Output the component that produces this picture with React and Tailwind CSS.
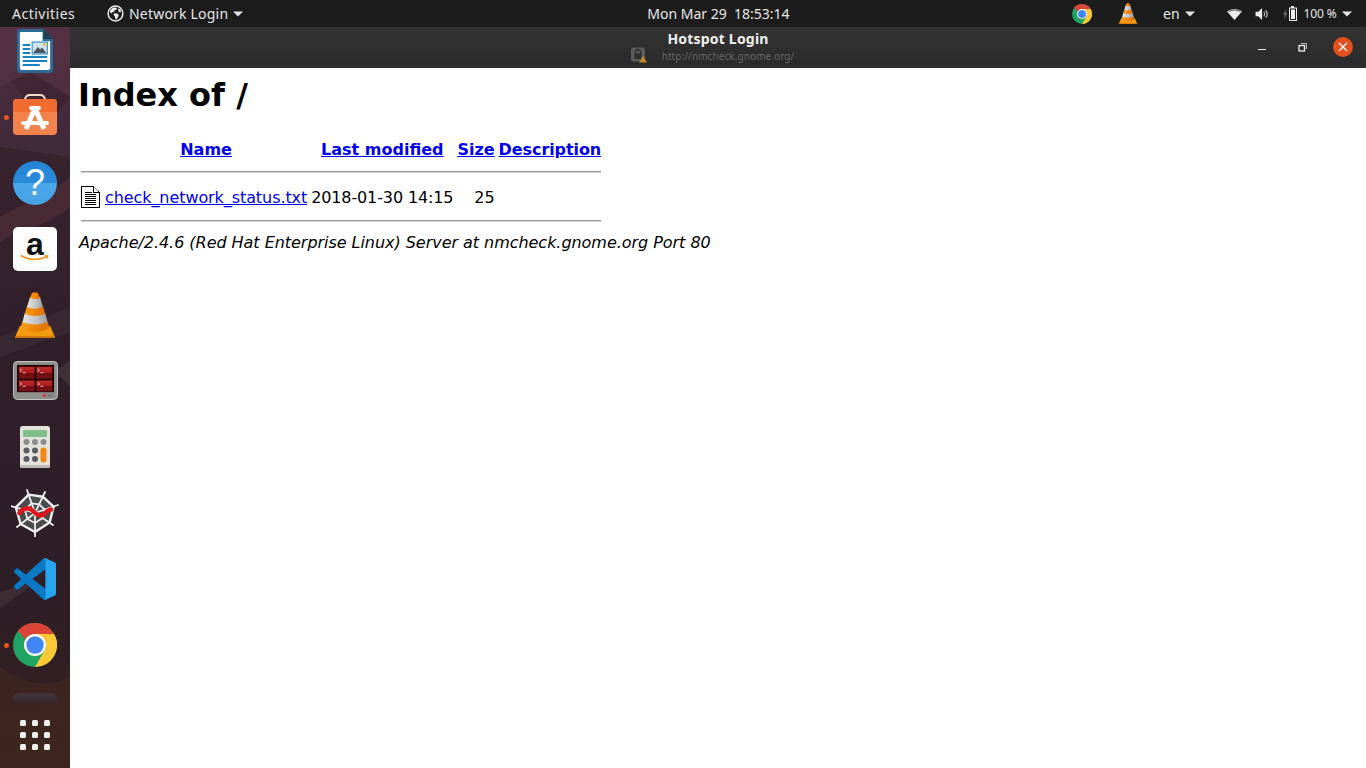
import React from "react";

const Caret = () => (
  <svg width="10" height="6" viewBox="0 0 10 6" className="shrink-0"><path d="M0 0.5h10L5 5.5z" fill="#e6e6e6" /></svg>
);

const Globe = () => (
  <svg width="17" height="17" viewBox="0 0 17 17">
    <circle cx="8.5" cy="8.5" r="7.4" fill="#1c1c1c" stroke="#ececec" strokeWidth="1.5" />
    <path d="M3 5.5l2.5-2.6 3-.6 1.5 1.2-1 1.6-1.6.2-.3 1.5-1.7.2-.6 1.4-1.6-1z" fill="#ececec" />
    <path d="M7.2 8.2l3 .3 1.6 1.6-.8 2.2-1.6 2.2-1-.2-.4-2.6-1.4-1.6z" fill="#ececec" />
    <path d="M11.5 3.2l2.4 2-.2 2.2-1.8-.4-.8-2z" fill="#ececec" />
  </svg>
);

const Chrome = ({ size }) => (
  <svg width={size} height={size} viewBox="0 0 48 48">
    <circle cx="24" cy="24" r="24" fill="#1fa463" />
    <path d="M24 0a24 24 0 0 1 20.8 12H24a12 12 0 0 0-10.4 6L5.2 8.5A24 24 0 0 1 24 0z" fill="#db4437" />
    <path d="M44.8 12H24v6h10.4a12 12 0 0 1 0 12L24 48a24 24 0 0 0 20.8-36z" fill="#fcc934" />
    <circle cx="24" cy="24" r="12" fill="#fff" />
    <circle cx="24" cy="24" r="9.5" fill="#4285f4" />
  </svg>
);

const Vlc = ({ w, h }) => (
  <svg width={w} height={h} viewBox="0 0 40 46">
    <defs>
      <linearGradient id="vlcO" x1="0" x2="1" y1="0" y2="0">
        <stop offset="0" stopColor="#f7a11a" />
        <stop offset="0.5" stopColor="#f08405" />
        <stop offset="1" stopColor="#d96f03" />
      </linearGradient>
      <linearGradient id="vlcG" x1="0" x2="1" y1="0" y2="0">
        <stop offset="0" stopColor="#e6e6e6" />
        <stop offset="0.55" stopColor="#c4c4c4" />
        <stop offset="1" stopColor="#9a9a9a" />
      </linearGradient>
    </defs>
    <path d="M0 45.500L5 33.500Q20 41 35 33.500L40 45.500z" fill="#f29a12" />
    <path d="M.8 44h38.400l.8 1.800H0z" fill="#d87a06" />
    <path d="M7.500 29Q20 33 32.500 29L34.500 36Q20 44 5.500 36z" fill="url(#vlcO)" />
    <path d="M9.800 21Q20 24.500 30.200 21L32.500 30Q20 35 7.500 30z" fill="url(#vlcG)" />
    <path d="M12 14Q20 17 28 14L30.200 22Q20 26 9.800 22z" fill="url(#vlcO)" />
    <path d="M15 5Q20 7 25 5L28 15Q20 18.500 12 15z" fill="url(#vlcG)" />
    <path d="M17 1Q20 -.5 23 1L25 6Q20 8 15 6z" fill="url(#vlcO)" />
  </svg>
);

const Writer = () => (
  <svg width="36" height="44" viewBox="0 0 38 44" preserveAspectRatio="none">
    <path d="M3 0h25l10 10v30a4 4 0 0 1-4 4H4a4 4 0 0 1-4-4V3a3 3 0 0 1 3-3z" fill="#2c6a93" />
    <path d="M4 3h23v9h8v27a2 2 0 0 1-2 2H5a2 2 0 0 1-2-2V4z" fill="#fff" />
    <path d="M28 0l10 10h-10z" fill="#1c3d58" />
    <g fill="#1b82c0">
      <rect x="6" y="15" width="8" height="2" /><rect x="6" y="19" width="8" height="2" /><rect x="6" y="23" width="8" height="2" />
      <rect x="6" y="27" width="26" height="2" /><rect x="6" y="31" width="26" height="2" /><rect x="6" y="35" width="18" height="2" />
    </g>
    <rect x="16" y="13" width="16" height="12" fill="#cfe4f0" stroke="#1b82c0" />
    <path d="M17 24l5-6 2.500 2.500 2-2 4.500 5.500z" fill="#4a5560" />
    <circle cx="29" cy="15.500" r="1.500" fill="#f1c232" />
  </svg>
);

const Store = () => (
  <svg width="46" height="46" viewBox="0 0 46 46">
    <path d="M13 9V6a5 5 0 0 1 5-5h10a5 5 0 0 1 5 5v3" fill="none" stroke="#f2dfc4" strokeWidth="2.200" />
    <rect x="1" y="5" width="44" height="36" rx="4" fill="#f4824c" />
    <path d="M1 9a4 4 0 0 1 4-4h36a4 4 0 0 1 4 4v9H1z" fill="#f26b30" />
    <path d="M23 14L14 35M23 14l9 21" stroke="#fff" strokeWidth="5" fill="none" />
    <path d="M11 29h24" stroke="#fff" strokeWidth="4" strokeLinecap="round" />
    <rect x="17" y="12" width="12" height="4" rx="2" fill="#fff" />
  </svg>
);

const Help = () => (
  <div className="relative flex h-[44px] w-[44px] items-center justify-center overflow-hidden rounded-full bg-[linear-gradient(#2585d4_0%,#2a8bdb_50%,#4aa6e8_50%,#46a2e4_100%)]">
    <span className="font-['Liberation_Sans',sans-serif] text-[36px] leading-none font-normal text-white">?</span>
  </div>
);

const Amazon = () => (
  <div className="relative flex h-[44px] w-[44px] flex-col items-center rounded-[5px] bg-[#fdfdfd]">
    <span className="mt-[2px] font-['Liberation_Sans',sans-serif] text-[32px] leading-[30px] font-bold text-[#111]">a</span>
    <svg width="30" height="8" viewBox="0 0 30 8" className="absolute top-[27px]">
      <path d="M1 1.500c8 5 19 5 26 .5" stroke="#f0961c" strokeWidth="1.500" fill="none" />
      <path d="M24 .8l4.500.5-1 4z" fill="#f0961c" />
    </svg>
  </div>
);

const Terminal = () => (
  <svg className="-mt-[2px]" width="45" height="39" viewBox="0 0 46 40">
    <defs>
      <linearGradient id="termP" x1="0" x2="0" y1="0" y2="1">
        <stop offset="0" stopColor="#c22a2a" />
        <stop offset="0.55" stopColor="#a81c1c" />
        <stop offset="0.56" stopColor="#6e0f12" />
        <stop offset="1" stopColor="#7e1214" />
      </linearGradient>
    </defs>
    <rect x="0.500" y="0.500" width="45" height="39" rx="4" fill="#8f8f8d" stroke="#c8c8c6" />
    <rect x="4" y="4" width="38" height="28" fill="#240606" />
    <g fill="url(#termP)">
      <rect x="6" y="6" width="16" height="12" /><rect x="24" y="6" width="16" height="12" />
      <rect x="6" y="20" width="16" height="11" /><rect x="24" y="20" width="16" height="11" />
    </g>
    <g stroke="#f2d6d6" strokeWidth="1" fill="none" opacity="0.85">
      <path d="M7 8l2 1.500-2 1.500M10 12h3M25 8l2 1.500-2 1.500M28 12h3M7 22l2 1.500-2 1.500M10 26h3M25 22l2 1.500-2 1.500M28 26h3" />
    </g>
    <circle cx="32" cy="35.500" r="1.500" fill="#e02020" />
    <rect x="35" y="34" width="6" height="3" fill="#7b7b7b" />
  </svg>
);

const Calc = () => (
  <svg width="30" height="42" viewBox="0 0 30 42">
    <rect width="30" height="42" rx="2.500" fill="#e4e2dc" />
    <rect y="39" width="30" height="3" rx="1.500" fill="#bdbbb4" />
    <rect x="3" y="4" width="24" height="7" rx="1" fill="#7fbd8a" />
    <g fill="#8d8d8d"><circle cx="6.500" cy="16" r="3" /><circle cx="15" cy="16" r="3" /><circle cx="23.500" cy="16" r="3" /></g>
    <g fill="#5a5a64"><circle cx="6.500" cy="24.500" r="3" /><circle cx="15" cy="24.500" r="3" /><circle cx="6.500" cy="33" r="3" /><circle cx="15" cy="33" r="3" /></g>
    <rect x="20.500" y="21.500" width="6" height="15" rx="3" fill="#f08a14" />
  </svg>
);

const Web = () => (
  <svg width="48" height="48" viewBox="0 0 48 48">
    <path d="M17.600 5.600L32 7.800 42.600 17.600 38.600 33.600 24 43 9.600 35 4.800 18.400z" fill="#4b4b4b" stroke="#f0f0f0" strokeWidth="2.400" strokeLinejoin="round" />
    <path d="M20.600 14.300L28.200 15.300 33.700 20.600 31.600 29 24 34 16.400 30 13.900 21z" fill="none" stroke="#f0f0f0" strokeWidth="1.800" />
    <path d="M24 24L16 1M24 24L34 3M24 24L47 16M24 24L42 36M24 24L24 48M24 24L6 38M24 24L0 17" stroke="#f0f0f0" strokeWidth="1.800" strokeLinecap="round" />
    <path d="M8.500 24C12 18.500 18 18 22 22S30 28 33 25 37 21 40 20.500" fill="none" stroke="#e0141c" strokeWidth="4.500" strokeLinecap="round" />
  </svg>
);

const VsCode = () => (
  <svg width="42" height="42" viewBox="0 0 100 100">
    <path d="M97 11L76 1a6 6 0 0 0-7 1.200L28 39 10 25.500a4 4 0 0 0-5 .2L1.300 29a4 4 0 0 0 0 6L17 50 1.300 65a4 4 0 0 0 0 6L5 74.300a4 4 0 0 0 5 .2L28 61l41 36.800A6 6 0 0 0 76 99l21-10a6 6 0 0 0 3-5.400V16.400A6 6 0 0 0 97 11zM75 73L44 50l31-23z" fill="#0b78c4" />
    <path d="M69 2.200A6 6 0 0 1 76 1l21 10a6 6 0 0 1 3 5.400v67.200a6 6 0 0 1-3 5.400L76 99a6 6 0 0 1-7-1.200c2.500 2.500 6 .8 6-2V4c0-2.800-3.500-4.300-6-1.800z" fill="#27a4f0" />
  </svg>
);

const AppsDots = () => (
  <div className="grid grid-cols-[6px_6px_6px] gap-x-[6px] gap-y-[6px]">
    {Array.from({ length: 9 }).map((_, i) => (
      <span key={i} className="h-[6px] w-[6px] rounded-[1.500px] bg-[#f2f0ee]" />
    ))}
  </div>
);

const DockItem = ({ children, active }) => (
  <div className="relative flex h-[66px] shrink-0 items-center justify-center">
    {active && <span className="absolute top-[31px] left-[4px] h-[5px] w-[5px] rounded-full bg-[#e95420]" />}
    {children}
  </div>
);

const Wallpaper = () => (
  <svg className="absolute inset-0 h-full w-full" viewBox="0 0 70 741" preserveAspectRatio="none">
    <path d="M0 0h70v70L30 45 0 60z" fill="#6b3f55" opacity="0.35" />
    <path d="M0 40l45 60 25-30v60L0 120z" fill="#50344a" opacity="0.4" />
    <path d="M0 190c25-15 50-20 70-40v30c-25 20-45 20-70 35z" fill="#6a3a42" opacity="0.35" />
    <path d="M0 310l70-30v25L0 330z" fill="#6a5a60" opacity="0.14" />
    <path d="M55 345l15-12v26z" fill="#8a7a7a" opacity="0.2" />
    <path d="M0 565l40-12-40 28z" fill="#8a7a7a" opacity="0.16" />
    <path d="M0 741V640c30 20 50 20 70 10v91z" fill="#4a2c20" opacity="0.45" />
  </svg>
);

const hrClass = "my-[8px] h-[2px] border-t border-b border-t-[#999] border-b-[#d4d4d4]";

export default function App() {
  return (
    <div className="flex h-[768px] w-[1366px] flex-col overflow-hidden bg-white font-['Noto_Sans',sans-serif]">
      <header className="flex h-[27px] shrink-0 items-center bg-[#1c1c1c] text-[14px] leading-none text-[#e6e6e6]">
        <div className="flex w-[647px] shrink-0 items-center">
          <span className="ml-[12px] w-[95px] tracking-[0.5px]">Activities</span>
          <Globe />
          <span className="ml-[5px] tracking-[0.2px]">Network Login</span>
          <span className="ml-[5px]"><Caret /></span>
        </div>
        <div className="w-[143px] whitespace-pre text-center">Mon Mar 29  18:53:14</div>
        <div className="ml-[282px] flex items-center">
          <Chrome size={20} />
          <span className="ml-[26px]"><Vlc w={20} h={21} /></span>
          <span className="ml-[25px]">en</span>
          <span className="ml-[5px]"><Caret /></span>
          <svg className="ml-[32px]" width="15" height="12" viewBox="0 0 15 12">
            <path d="M0 3.500C4 0 11 0 15 3.500L7.500 12z" fill="#efefef" />
            <path d="M1.500 3.800C5 1.500 10 1.500 13.500 3.800" stroke="#1c1c1c" strokeWidth="0.800" fill="none" />
          </svg>
          <svg className="ml-[13px]" width="15" height="12" viewBox="0 0 15 13">
            <path d="M0 4h3l4-4v13L3 9H0z" fill="#efefef" />
            <path d="M9 4c1 1.500 1 3.500 0 5M11 2.500c2 2.500 2 5.500 0 8" stroke="#cfcfcf" strokeWidth="1.200" fill="none" />
          </svg>
          <svg className="ml-[13px]" width="14" height="15" viewBox="0 0 14 15">
            <path d="M3.500 3L0 8.500h1.700L1 13l3.500-6H2.800z" fill="#6e6e6e" />
            <path d="M8 0h3v1.500h3V15H6V1.500h2z" fill="#efefef" />
            <rect x="7" y="2.500" width="6" height="11.500" fill="#1c1c1c" />
            <rect x="8" y="3.500" width="4" height="9.500" fill="#efefef" />
          </svg>
          <span className="ml-[7px] text-[12px] tracking-[-0.1px]">100 %</span>
          <span className="ml-[5px]"><Caret /></span>
        </div>
      </header>
      <div className="flex min-h-0 flex-1">
        <aside className="relative flex w-[70px] shrink-0 flex-col bg-[linear-gradient(170deg,#4a2a3a_0%,#38232f_16%,#2f1f29_45%,#2e1e26_75%,#35211f_100%)]">
          <Wallpaper />
          <div className="relative h-[676px] shrink-0 overflow-hidden">
            <div className="-mt-[9px] flex flex-col">
              <DockItem><Writer /></DockItem>
              <DockItem active><Store /></DockItem>
              <DockItem><Help /></DockItem>
              <DockItem><Amazon /></DockItem>
              <DockItem><Vlc w={40} h={46} /></DockItem>
              <DockItem><Terminal /></DockItem>
              <DockItem><Calc /></DockItem>
              <DockItem><Web /></DockItem>
              <DockItem><VsCode /></DockItem>
              <DockItem active><Chrome size={44} /></DockItem>
              <DockItem><div className="mt-[8px] h-[44px] w-[44px] rounded-[6px] bg-[linear-gradient(#43373b,#33262b_10px)]" /></DockItem>
            </div>
          </div>
          <div className="relative flex flex-1 items-start justify-center pt-[17px]"><AppsDots /></div>
        </aside>
        <main className="flex min-w-0 flex-1 flex-col">
          <div className="relative flex h-[41px] shrink-0 flex-col items-center bg-[linear-gradient(#333333,#2a2a2a)]">
            <span className="mt-[3px] text-[14px] leading-[17px] font-bold tracking-[0.2px] text-[#f0f0f0]">Hotspot Login</span>
            <span className="relative mt-[2px] ml-[20px] text-[10px] leading-[14px] tracking-[0.08px] text-[#666]">
              http://nmcheck.gnome.org/
              <svg className="absolute top-[-2px] left-[-31px]" width="16" height="16" viewBox="0 0 16 16">
                <rect x="0" y="0.500" width="14" height="14" rx="2.500" fill="#5c5c5c" />
                <path d="M4.500 7V5a2.500 2.500 0 0 1 5 0v2" fill="none" stroke="#2e2e2e" strokeWidth="1.500" />
                <rect x="3.500" y="6.500" width="7" height="5.500" fill="#2e2e2e" />
                <path d="M12 9l4 6.500H8z" fill="#c88a2a" />
              </svg>
            </span>
            <div className="absolute top-0 right-0 flex h-full items-start">
              <span className="mt-[22px] mr-[32px] h-px w-[8px] bg-[#e8e8e8]" />
              <svg className="mt-[16px] mr-[26px]" width="9" height="9" viewBox="0 0 9 9">
                <path d="M3 .5h5.500V6" fill="none" stroke="#bdbdbd" />
                <rect x="1" y="2.500" width="5.500" height="5.500" fill="none" stroke="#f0f0f0" strokeWidth="1.300" />
              </svg>
              <div className="mt-[10px] mr-[13px] flex h-[20px] w-[20px] items-center justify-center rounded-full bg-[#e2501d]">
                <svg width="10" height="10" viewBox="0 0 10 10"><path d="M1 1l8 8M9 1l-8 8" stroke="#fff" strokeWidth="1.400" /></svg>
              </div>
            </div>
          </div>
          <div className="flex-1 bg-white px-2 pt-2 font-['DejaVu_Sans',sans-serif] text-[16px] leading-[19px] text-black">
            <h1 className="pt-px text-[32px] leading-[37px] font-bold">Index of /</h1>
            <table className="mt-[23px] border-separate border-spacing-[2px]">
              <thead>
                <tr>
                  <th className="p-px"></th>
                  <th className="p-px text-center font-bold"><a className="text-[#0000ee] underline">Name</a></th>
                  <th className="p-px text-center font-bold"><a className="text-[#0000ee] underline">Last modified</a></th>
                  <th className="p-px text-center font-bold"><a className="text-[#0000ee] underline">Size</a></th>
                  <th className="p-px text-center font-bold"><a className="tracking-[-0.09px] text-[#0000ee] underline">Description</a></th>
                </tr>
                <tr><th colSpan={5} className="p-px"><hr className={hrClass} /></th></tr>
              </thead>
              <tbody>
                <tr>
                  <td className="p-px pt-[2px] align-top">
                    <svg className="block" width="20" height="22" viewBox="0 0 20 22" shapeRendering="crispEdges">
                      <path d="M.5.5h12l6 6v15H.5z" fill="#fff" stroke="#000" />
                      <path d="M12.500.5v6h6" fill="none" stroke="#000" />
                      <path d="M13.500 1.500l4 4" stroke="#888" />
                      <path d="M4 6h7M4 8h11M4 10h11M4 12h11M4 14h11M4 16h11M4 18h11" stroke="#000" />
                    </svg>
                  </td>
                  <td className="p-px pt-[2px] align-middle"><a className="tracking-[-0.08px] text-[#0000ee] underline">check_network_status.txt</a></td>
                  <td className="p-px pt-[2px] align-middle tracking-[-0.12px]">2018-01-30 14:15</td>
                  <td className="p-px pt-[2px] text-right align-middle">25</td>
                  <td className="p-px"></td>
                </tr>
                <tr><th colSpan={5} className="p-px"><hr className={hrClass} /></th></tr>
              </tbody>
            </table>
            <address className="ml-px tracking-[-0.04px] italic">Apache/2.4.6 (Red Hat Enterprise Linux) Server at nmcheck.gnome.org Port 80</address>
          </div>
        </main>
      </div>
    </div>
  );
}
